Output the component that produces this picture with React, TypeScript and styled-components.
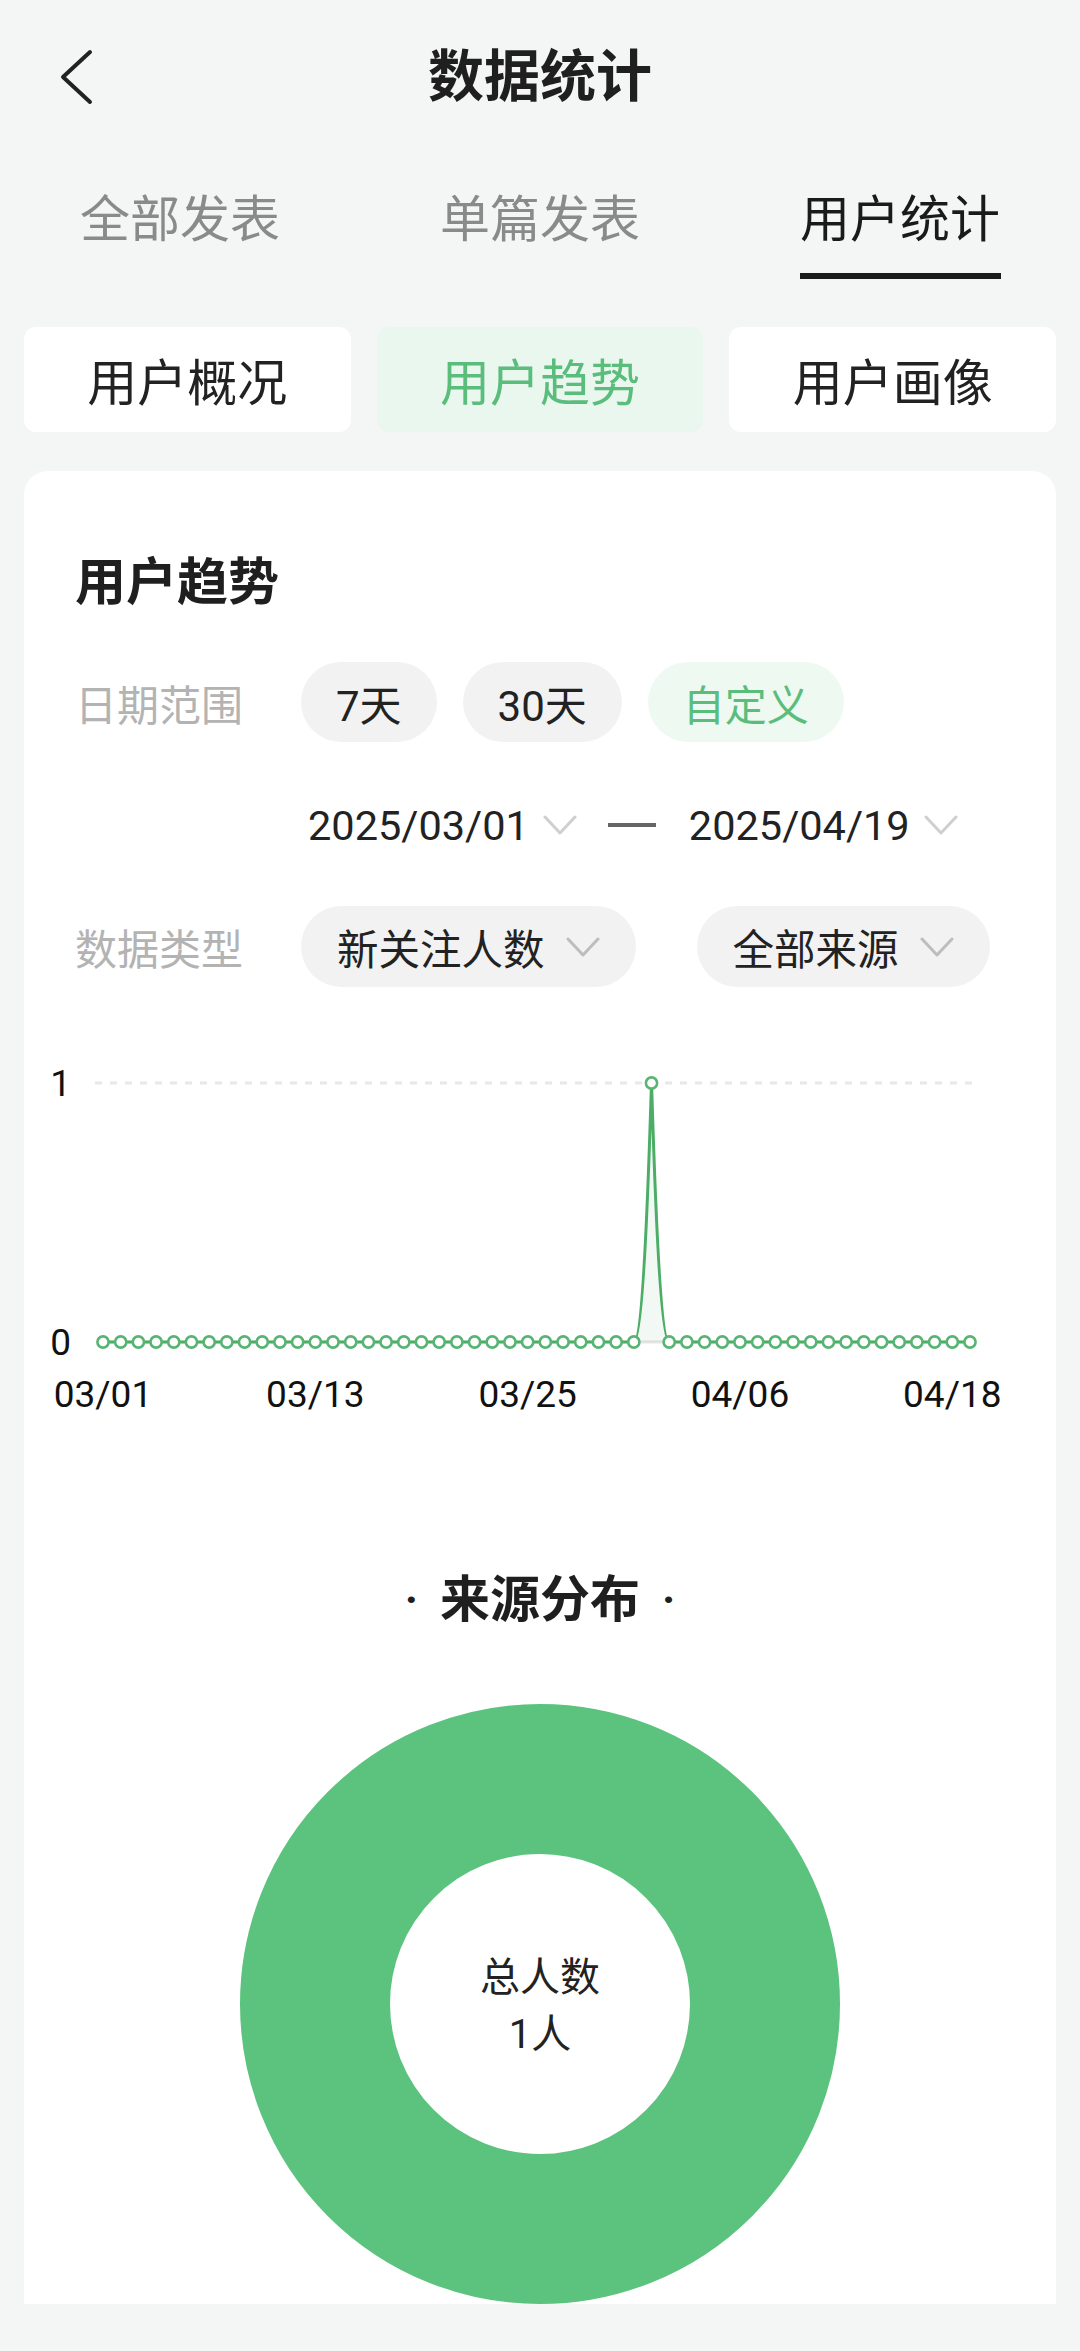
import React from 'react';
import styled, { createGlobalStyle } from 'styled-components';

const Global = createGlobalStyle`
  html, body { margin: 0; padding: 0; background: #f4f6f5; }
  body { font-family: Roboto, "Noto Sans CJK SC", sans-serif; color: #222; }
  * { box-sizing: border-box; }
`;

const Page = styled.div`
  width: 1080px;
  min-height: 2351px;
  padding-bottom: 48px;
  background: #f4f6f5;
`;

const Header = styled.div`
  height: 154px;
  display: grid;
  grid-template-columns: 1fr auto 1fr;
  align-items: center;
`;

const Back = styled.div`
  padding-left: 58px;
  display: flex;
  align-items: center;
`;

const Title = styled.div`
  font-size: 56px;
  font-weight: 700;
  line-height: 64px;
  color: #1f1f1f;
`;

const Tabs = styled.div`
  display: grid;
  grid-template-columns: repeat(3, 1fr);
`;

const Tab = styled.div<{ $active?: boolean }>`
  display: flex;
  flex-direction: column;
  align-items: center;
  padding-top: 36px;
  font-size: 50px;
  line-height: 60px;
  color: ${(p) => (p.$active ? '#1a1a1a' : '#8a8a8a')};
  font-weight: 400;
`;

const Underline = styled.div<{ $active?: boolean }>`
  width: 201px;
  height: 6px;
  margin-top: 23px;
  background: ${(p) => (p.$active ? '#1a1a1a' : 'transparent')};
`;

const SegRow = styled.div`
  display: grid;
  grid-template-columns: repeat(3, 1fr);
  gap: 26px;
  padding: 0 24px;
  margin-top: 48px;
`;

const Seg = styled.div<{ $active?: boolean }>`
  height: 105px;
  border-radius: 12px;
  display: flex;
  align-items: center;
  justify-content: center;
  font-size: 50px;
  padding-bottom: 2px;
  background: ${(p) => (p.$active ? '#e9f7ef' : '#ffffff')};
  color: ${(p) => (p.$active ? '#5bbd7c' : '#222')};
`;

const Card = styled.div`
  margin: 39px 24px 0;
  background: #fff;
  border-radius: 24px 24px 0 0;
  padding-top: 82px;
`;

const Heading = styled.div`
  padding: 0 51px;
  font-size: 51px;
  line-height: 60px;
  font-weight: 700;
  color: #1f1f1f;
`;

const FilterRow = styled.div<{ $mt: number }>`
  display: flex;
  align-items: center;
  padding: 0 51px;
  margin-top: ${(p) => p.$mt}px;
`;

const RowLabel = styled.div`
  width: 226px;
  flex-shrink: 0;
  font-size: 42px;
  color: #b3b3b3;
`;

const Chips = styled.div<{ $gap: number }>`
  display: flex;
  gap: ${(p) => p.$gap}px;
`;

const Chip = styled.div<{ $active?: boolean }>`
  height: 80px;
  padding: 0 35px;
  border-radius: 40px;
  display: flex;
  align-items: center;
  font-size: 42px;
  background: ${(p) => (p.$active ? '#eef9f2' : '#f2f2f2')};
  color: ${(p) => (p.$active ? '#5bbd7c' : '#222')};
`;

const Dropdown = styled.div`
  height: 81px;
  padding: 0 36px;
  border-radius: 41px;
  display: flex;
  align-items: center;
  gap: 21px;
  font-size: 41.5px;
  background: #f2f2f2;
  color: #222;
`;

const DateRow = styled.div`
  display: flex;
  align-items: center;
  height: 60px;
  margin-top: 53px;
  padding-left: 284px;
`;

const DateText = styled.span`
  font-size: 41.5px;
  color: #222;
`;

const DateChevron = styled.span`
  display: flex;
  margin-left: 14px;
`;

const Dash = styled.div`
  width: 48px;
  height: 4px;
  background: #666;
  margin: 0 33px 0 31px;
`;

const ChartSvg = styled.svg`
  display: block;
  margin-top: 43px;
`;

const SectionTitle = styled.div`
  margin-top: 140px;
  display: flex;
  justify-content: center;
  align-items: center;
  gap: 22px;
  font-size: 50px;
  line-height: 60px;
  font-weight: 700;
  color: #1f1f1f;
`;

const Dot = styled.span`
  font-size: 44px;
  font-weight: 700;
`;

const DonutWrap = styled.div`
  position: relative;
  width: 600px;
  height: 600px;
  margin: 74px auto 0;
`;

const DonutCenter = styled.div`
  position: absolute;
  left: 0;
  right: 0;
  top: 0;
  bottom: 0;
  display: flex;
  flex-direction: column;
  align-items: center;
  justify-content: center;
  font-size: 40px;
  line-height: 57px;
  color: #222;
  padding-top: 3px;
`;

const Chevron = ({ color = '#bdbdbd' }: { color?: string }) => (
  <svg width="34" height="20" viewBox="0 0 34 20">
    <polyline points="2,2 17,18 32,2" fill="none" stroke={color} strokeWidth="3" strokeLinejoin="round" strokeLinecap="round" />
  </svg>
);

const N = 50;
const X0 = 79;
const X1 = 946;
const DX = (X1 - X0) / (N - 1);
const Y1 = 53;
const Y0 = 312;
const H = Y0 - Y1;
const data = Array.from({ length: N }, (_, i) => (i === 31 ? 1 : 0));
const px = (i: number) => X0 + i * DX;
const py = (v: number) => (v ? Y1 : Y0);

function seg(i: number) {
  const a = data[i - 1];
  const b = data[i];
  if (a === b) return ` L ${px(i)} ${py(b)}`;
  if (b > a) {
    return ` C ${px(i - 1) + DX * 0.6} ${Y0} ${px(i) - DX * 0.08} ${Y1 + 0.15 * H} ${px(i)} ${Y1}`;
  }
  return ` C ${px(i - 1) + DX * 0.08} ${Y1 + 0.15 * H} ${px(i) - DX * 0.6} ${Y0} ${px(i)} ${Y0}`;
}

function buildPath() {
  let d = `M ${px(0)} ${py(data[0])}`;
  for (let i = 1; i < N; i++) d += seg(i);
  return d;
}

const areaPath = `M ${px(30)} ${Y0}${seg(31)}${seg(32)} Z`;

const xLabels = [
  { i: 0, t: '03/01' },
  { i: 12, t: '03/13' },
  { i: 24, t: '03/25' },
  { i: 36, t: '04/06' },
  { i: 48, t: '04/18' },
];

const TrendChart = () => (
  <ChartSvg width="1032" height="400" viewBox="0 0 1032 400">
    <line x1="71" y1={Y1} x2="954" y2={Y1} stroke="#e8e8e8" strokeWidth="3" strokeDasharray="7 8" />
    <line x1={X0} y1={Y0} x2={X1} y2={Y0} stroke="#e6e6e6" strokeWidth="3" />
    <text x="47" y={Y1} textAnchor="end" dominantBaseline="central" fontSize="37" fontFamily="Roboto, sans-serif" fill="#111">1</text>
    <text x="47" y={Y0} textAnchor="end" dominantBaseline="central" fontSize="37" fontFamily="Roboto, sans-serif" fill="#111">0</text>
    <path d={areaPath} fill="rgba(76,175,101,0.07)" />
    <path d={buildPath()} fill="none" stroke="#4cad66" strokeWidth="3" />
    {data.map((v, i) => (
      <circle key={i} cx={px(i)} cy={py(v)} r="5.6" fill="#fff" stroke="#57b472" strokeWidth="2.6" />
    ))}
    {xLabels.map((l) => (
      <text key={l.t} x={px(l.i)} y="364" textAnchor="middle" dominantBaseline="central" fontSize="37" fontFamily="Roboto, sans-serif" fill="#111">
        {l.t}
      </text>
    ))}
  </ChartSvg>
);

export default function App() {
  return (
    <Page>
      <Global />
      <Header>
        <Back>
          <svg width="36" height="56" viewBox="0 0 36 56">
            <polyline points="32,3 5,28 32,53" fill="none" stroke="#222" strokeWidth="4" strokeLinecap="round" strokeLinejoin="round" />
          </svg>
        </Back>
        <Title>数据统计</Title>
        <div />
      </Header>
      <Tabs>
        <Tab>
          全部发表
          <Underline />
        </Tab>
        <Tab>
          单篇发表
          <Underline />
        </Tab>
        <Tab $active>
          用户统计
          <Underline $active />
        </Tab>
      </Tabs>
      <SegRow>
        <Seg>用户概况</Seg>
        <Seg $active>用户趋势</Seg>
        <Seg>用户画像</Seg>
      </SegRow>
      <Card>
        <Heading>用户趋势</Heading>
        <FilterRow $mt={49}>
          <RowLabel>日期范围</RowLabel>
          <Chips $gap={26}>
            <Chip>7天</Chip>
            <Chip>30天</Chip>
            <Chip $active>自定义</Chip>
          </Chips>
        </FilterRow>
        <DateRow>
          <DateText>2025/03/01</DateText>
          <DateChevron>
            <Chevron color="#cfcfcf" />
          </DateChevron>
          <Dash />
          <DateText>2025/04/19</DateText>
          <DateChevron>
            <Chevron color="#cfcfcf" />
          </DateChevron>
        </DateRow>
        <FilterRow $mt={51}>
          <RowLabel>数据类型</RowLabel>
          <Chips $gap={61}>
            <Dropdown>
              新关注人数
              <Chevron />
            </Dropdown>
            <Dropdown>
              全部来源
              <Chevron />
            </Dropdown>
          </Chips>
        </FilterRow>
        <TrendChart />
        <SectionTitle>
          <Dot>·</Dot>
          来源分布
          <Dot>·</Dot>
        </SectionTitle>
        <DonutWrap>
          <svg width="600" height="600" viewBox="0 0 600 600">
            <circle cx="300" cy="300" r="225" fill="none" stroke="#5bc37e" strokeWidth="150" />
          </svg>
          <DonutCenter>
            <div>总人数</div>
            <div>1人</div>
          </DonutCenter>
        </DonutWrap>
      </Card>
    </Page>
  );
}
